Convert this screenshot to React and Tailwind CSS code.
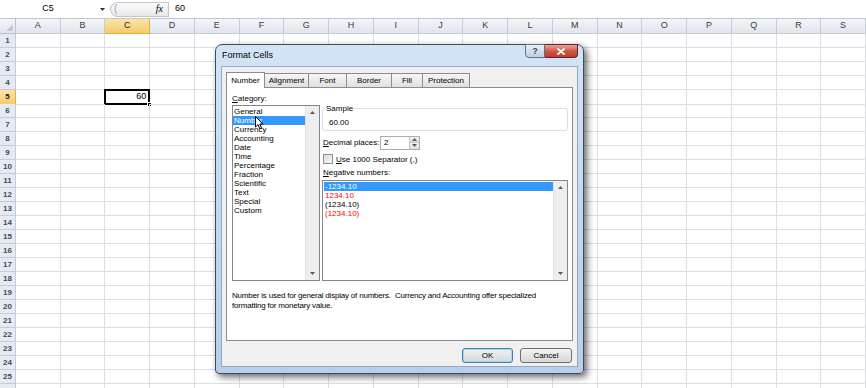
import React from 'react';

const COLS = ['A', 'B', 'C', 'D', 'E', 'F', 'G', 'H', 'I', 'J', 'K', 'L', 'M', 'N', 'O', 'P', 'Q', 'R', 'S'];
const ROWS = Array.from({ length: 26 }, (_, i) => i + 1);

const CATEGORIES = ['General', 'Number', 'Currency', 'Accounting', 'Date', 'Time', 'Percentage', 'Fraction', 'Scientific', 'Text', 'Special', 'Custom'];

const NEGATIVES = [
  { text: '-1234.10', red: false },
  { text: '1234.10', red: true },
  { text: '(1234.10)', red: false },
  { text: '(1234.10)', red: true },
];

const TABS = [
  { label: 'Number', w: 'w-[39px]' },
  { label: 'Alignment', w: 'w-[44px]' },
  { label: 'Font', w: 'w-[38px]' },
  { label: 'Border', w: 'w-[45px]' },
  { label: 'Fill', w: 'w-[31px]' },
  { label: 'Protection', w: 'w-[47px]' },
];

const GRID_COLS = 'grid grid-cols-[16px_repeat(19,minmax(0,1fr))]';

// tiny scroll / spin arrows
const Arrow = ({ down }) => (
  <svg width="5" height="3" viewBox="0 0 5 3">
    <path d={down ? 'M0 0 H5 L2.5 3 Z' : 'M0 3 H5 L2.5 0 Z'} fill="#5a5a5a" />
  </svg>
);

const ScrollBar = () => (
  <div className="w-[14px] bg-[#eeeeee] border-l border-[#e2e2e2] flex flex-col items-center justify-between py-[5px]">
    <Arrow />
    <Arrow down />
  </div>
);

const FormulaBar = () => (
  <div className="h-[19px] flex items-center border-b border-[#c3c6ca] bg-white text-[9px] text-black">
    <div className="w-[110px] h-full flex items-center">
      <span className="flex-1 text-center pr-[4px]">C5</span>
      <svg width="5" height="3" viewBox="0 0 5 3" className="mr-[5px]">
        <path d="M0 0 H5 L2.5 3 Z" fill="#333" />
      </svg>
    </div>
    <div className="w-[58px] h-[15px] rounded-l-full border border-r-0 border-[#c3c7cc] bg-linear-to-b from-[#fbfbfb] to-[#e6e8eb] flex items-center justify-between pl-[3px] pr-[5px]">
      <span className="text-[10px] leading-none text-[#9a9ea4]">(</span>
      <span className="italic font-['Liberation_Serif',serif] text-[10px] leading-none">fx</span>
    </div>
    <div className="flex-1 h-[15px] border-l border-[#c3c7cc] flex items-center pl-[6px]">60</div>
  </div>
);

const Sheet = () => (
  <div className="font-['Liberation_Sans',sans-serif] text-[9px]">
    <div className={`${GRID_COLS} h-[15px]`}>
      <div className="bg-linear-to-b from-[#f3f6f9] to-[#dfe5ec] border-r border-b border-[#b9c3cf] flex items-end justify-end p-[2px]">
        <svg width="7" height="7" viewBox="0 0 7 7">
          <path d="M7 0 V7 H0 Z" fill="#c2c9d2" />
        </svg>
      </div>
      {COLS.map((c) => (
        <div
          key={c}
          className={`border-r border-b flex items-center justify-center ${
            c === 'C'
              ? 'bg-linear-to-b from-[#fbe4a8] to-[#f6cb6a] border-[#e0ad4a] text-[#222]'
              : 'bg-linear-to-b from-[#f3f6f9] to-[#dfe5ec] border-[#c3ccd7] text-[#333c48]'
          }`}
        >
          {c}
        </div>
      ))}
    </div>
    {ROWS.map((r) => (
      <div key={r} className={`${GRID_COLS} h-[14px]`}>
        <div
          className={`border-r border-b flex items-center justify-center font-bold text-[8px] ${
            r === 5
              ? 'bg-linear-to-b from-[#fbe4a8] to-[#f6cb6a] border-[#e0ad4a] text-[#222]'
              : 'bg-[#e6ebf1] border-[#c3ccd7] text-[#3a4b5e]'
          }`}
        >
          {r}
        </div>
        {COLS.map((c) => (
          <div key={c} className="relative border-r border-b border-[#dcdfe2] flex items-center justify-end pr-[3px] text-black">
            {r === 5 && c === 'C' && (
              <>
                60
                <div className="absolute -left-[1px] -top-[1px] -right-[1px] -bottom-[1px] border-2 border-black" />
                <div className="absolute -right-[3px] -bottom-[3px] w-[5px] h-[5px] bg-black border border-white" />
              </>
            )}
          </div>
        ))}
      </div>
    ))}
  </div>
);

const Dialog = () => (
  <div className="absolute left-[215px] top-[44px] w-[369px] h-[330px] rounded-t-[7px] rounded-b-[4px] border border-[#3b4b5e] bg-linear-to-b from-[#d4e4f6] via-[#c3d8ef] to-[#b8cfe9] shadow-[3px_3px_7px_rgba(0,0,0,0.6)] flex flex-col font-['Liberation_Sans',sans-serif] text-black">
    <div className="h-[21px] flex items-start justify-between">
      <span className="pl-[6px] pt-[5px] text-[9px] leading-[11px]">Format Cells</span>
      <div className="flex mr-[5px] -mt-[1px]">
        <div className="w-[20px] h-[14px] rounded-bl-[4px] border border-[#5f6f83] bg-linear-to-b from-[#e9eff6] to-[#c2cfdd] flex items-center justify-center text-[9px] font-bold text-[#3a4656] leading-none">
          ?
        </div>
        <div className="w-[33px] h-[14px] rounded-br-[4px] border border-l-0 border-[#5e2620] bg-linear-to-b from-[#e8a496] via-[#d0584a] to-[#c23b2e] flex items-center justify-center">
          <svg width="8" height="7" viewBox="0 0 8 7">
            <path d="M1 1 L7 6 M7 1 L1 6" stroke="#fff" strokeWidth="1.8" strokeLinecap="round" />
          </svg>
        </div>
      </div>
    </div>

    <div className="mx-[5px] mb-[6px] flex-1 border border-[#94a9c0] bg-[#f0f0f0] flex flex-col px-[4px] pt-[5px] pb-[3px] text-[8px] leading-[9px]">
      <div className="flex h-[15px] items-end">
        {TABS.map((t, i) => (
          <div
            key={t.label}
            className={`${t.w} flex items-center justify-center border-t border-r border-[#898c95] ${i === 0 ? 'border-l' : ''} ${
              i === 0
                ? 'h-[16px] bg-white relative z-10 -mb-[1px]'
                : 'h-[14px] bg-linear-to-b from-[#f6f6f6] to-[#e0e0e0]'
            }`}
          >
            {t.label}
          </div>
        ))}
      </div>

      <div className="flex-1 bg-white border border-[#898c95] flex flex-col pl-[5px] pr-[4px] pt-[6px]">
        <div className="flex gap-[2px]">
          <div className="w-[88px] flex flex-col">
            <div className="h-[10px]">
              <span className="underline">C</span>ategory:
            </div>
            <div className="mt-[1px] h-[176px] border border-[#828790] flex">
              <div className="flex-1 pt-[1px]">
                {CATEGORIES.map((c) => (
                  <div
                    key={c}
                    className={`h-[9px] pl-[1px] ${c === 'Number' ? 'bg-[#3399ff] text-white' : ''}`}
                  >
                    {c}
                  </div>
                ))}
              </div>
              <ScrollBar />
            </div>
          </div>

          <div className="flex-1 flex flex-col">
            <div className="relative mt-[14px] h-[23px] border border-[#d5dfe5] rounded-[3px] flex items-end pl-[6px] pb-[3px]">
              <span className="absolute -top-[5px] left-[2px] px-[1px] bg-white">Sample</span>
              60.00
            </div>
            <div className="mt-[4px] flex items-center h-[15px]">
              <span className="w-[58px] pl-[1px]">
                <span className="underline">D</span>ecimal places:
              </span>
              <div className="w-[40px] h-[14px] border border-[#abadb3] flex">
                <div className="flex-1 flex items-center pl-[3px]">2</div>
                <div className="w-[10px] flex flex-col border-l border-[#c5c5c5]">
                  <div className="flex-1 bg-linear-to-b from-[#f4f4f4] to-[#dedede] flex items-center justify-center border-b border-[#c5c5c5]">
                    <Arrow />
                  </div>
                  <div className="flex-1 bg-linear-to-b from-[#f4f4f4] to-[#dedede] flex items-center justify-center">
                    <Arrow down />
                  </div>
                </div>
              </div>
            </div>
            <div className="mt-[4px] flex items-center h-[10px] gap-[3px] pl-[1px]">
              <div className="w-[10px] h-[10px] border border-[#8e8f8f] bg-linear-to-br from-[#dcdcdc] to-[#f6f6f6]" />
              <span>
                <span className="underline">U</span>se 1000 Separator (,)
              </span>
            </div>
            <div className="mt-[4px] h-[10px] pl-[1px]">
              <span className="underline">N</span>egative numbers:
            </div>
            <div className="mt-[2px] h-[101px] border border-[#828790] flex">
              <div className="flex-1 pt-[1px] pl-[1px]">
                {NEGATIVES.map((n, i) => (
                  <div
                    key={i}
                    className={`h-[9px] pl-[1px] ${i === 0 ? 'bg-[#3399ff] text-white' : n.red ? 'text-[#ff0000]' : ''}`}
                  >
                    {n.text}
                  </div>
                ))}
              </div>
              <ScrollBar />
            </div>
          </div>
        </div>

        <div className="mt-[10px] leading-[10px] whitespace-pre tracking-[-0.2px]">
          {'Number is used for general display of numbers.  Currency and Accounting offer specialized\nformatting for monetary value.'}
        </div>
      </div>

      <div className="mt-[7px] flex justify-end gap-[7px]">
        <button className="w-[51px] h-[15px] rounded-[3px] border border-[#3c7fb1] bg-linear-to-b from-[#f2f2f2] to-[#d8d8d8] shadow-[inset_0_0_0_1px_#a7d6f4] text-[8px] leading-none">
          OK
        </button>
        <button className="w-[52px] h-[15px] rounded-[3px] border border-[#707070] bg-linear-to-b from-[#f2f2f2] to-[#d8d8d8] text-[8px] leading-none mr-[1px]">
          Cancel
        </button>
      </div>
    </div>
  </div>
);

const Cursor = () => (
  <svg width="9" height="14" viewBox="0 0 9 14" className="absolute left-[255px] top-[116px]">
    <path d="M0.5 0.5 V11 L3 8.6 L4.8 12.8 L6.5 12 L4.8 8 H8 Z" fill="#fff" stroke="#000" strokeWidth="1" />
  </svg>
);

export default function App() {
  return (
    <div className="relative w-[866px] h-[388px] overflow-hidden bg-white font-['Liberation_Sans',sans-serif]">
      <FormulaBar />
      <Sheet />
      <Dialog />
      <Cursor />
    </div>
  );
}
